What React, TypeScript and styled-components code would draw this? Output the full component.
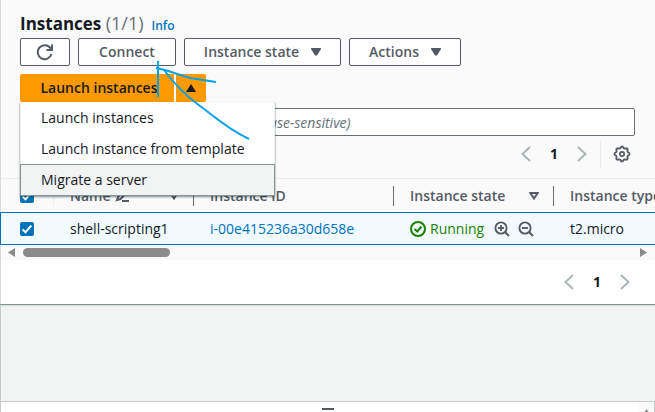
import React from "react";
import styled, { createGlobalStyle, css } from "styled-components";

const color = {
  text: "#16191f",
  secondary: "#545b64",
  muted: "#687078",
  link: "#0073bb",
  line: "#d5dbdb",
  divider: "#eaeded",
  orange: "#ff9900",
  green: "#1d8102",
  header: "#fafafa",
};

const GlobalStyle = createGlobalStyle`
  * { box-sizing: border-box; }
  body {
    margin: 0;
    background: #ffffff;
    color: ${color.text};
    font: 14px/20px "Open Sans", "Noto Sans", sans-serif;
    overflow: hidden;
  }
  button, input { font: inherit; color: inherit; }
`;

const Page = styled.div`
  display: flex;
  flex-direction: column;
  height: 100vh;
`;

const Panel = styled.main`
  flex: none;
  background: #ffffff;
  border-bottom: 1px solid #879596;
`;

const Header = styled.header`
  border-left: 1px solid ${color.line};
  border-bottom: 1px solid ${color.divider};
  background: ${color.header};
  padding: 12px 20px 10px 19px;
`;

const TitleRow = styled.div`
  display: flex;
  align-items: baseline;
  gap: 8px;
  height: 26px;
`;

const Title = styled.h1`
  margin: 0;
  font-size: 17px;
  line-height: 22px;
  font-weight: 700;
`;

const Count = styled.span`
  color: ${color.muted};
  font-size: 18px;
  font-weight: 400;
`;

const InfoLink = styled.a`
  color: ${color.link};
  font-size: 12px;
  font-weight: 600;
  text-decoration: none;
`;

const ButtonRow = styled.div`
  display: flex;
  gap: 8px;
  margin-bottom: 8px;
`;

const Button = styled.button<{ $width: number }>`
  display: flex;
  align-items: center;
  justify-content: center;
  gap: 12px;
  width: ${(p) => p.$width}px;
  height: 28px;
  padding: 0;
  border: 1px solid ${color.secondary};
  border-radius: 2px;
  background: #ffffff;
  color: ${color.secondary};
  font-weight: 600;
  white-space: nowrap;
`;

const LaunchGroup = styled.div`
  position: relative;
  display: flex;
  gap: 2px;
  margin-bottom: 6px;
`;

const LaunchButton = styled.button<{ $end?: boolean }>`
  display: flex;
  align-items: center;
  justify-content: center;
  width: ${(p) => (p.$end ? 30 : 154)}px;
  height: 28px;
  padding: ${(p) => (p.$end ? "0" : "0 0 0 4px")};
  border: 0;
  border-radius: ${(p) => (p.$end ? "0 2px 2px 0" : "2px 0 0 2px")};
  background: ${color.orange};
  color: ${color.text};
  font-weight: 600;
  white-space: nowrap;
`;

const Menu = styled.ul`
  position: absolute;
  z-index: 2;
  top: 28px;
  left: 0;
  width: 255px;
  margin: 0;
  padding: 0;
  list-style: none;
  background: #ffffff;
  border: 1px solid ${color.divider};
  border-width: 0 1px;
  box-shadow: 0 1px 2px rgba(0, 28, 36, 0.5);
`;

const MenuItem = styled.li<{ $active?: boolean }>`
  height: 31px;
  ${(p) =>
    p.$active &&
    css`
      height: 32px;
      margin: 0 -1px;
      border: 1px solid #879596;
      background: #f2f3f3;
    `}
`;

const MenuButton = styled.button`
  display: block;
  width: 100%;
  height: 100%;
  padding: 0 20px;
  border: 0;
  background: transparent;
  text-align: left;
`;

const Search = styled.input`
  display: block;
  width: 100%;
  height: 28px;
  padding: 0 36px;
  border: 1px solid ${color.muted};
  border-radius: 2px;
  background: #ffffff;
  &::placeholder {
    color: ${color.muted};
    font-style: italic;
    opacity: 1;
  }
`;

const Tools = styled.div`
  display: flex;
  justify-content: flex-end;
  align-items: center;
  height: 28px;
  margin-top: 4px;
`;

const Pager = styled.nav`
  display: flex;
  align-items: center;
`;

const IconButton = styled.button<{ $width?: number }>`
  display: flex;
  align-items: center;
  justify-content: center;
  width: ${(p) => p.$width ?? 28}px;
  height: 28px;
  padding: 0;
  border: 0;
  background: transparent;
  color: ${color.secondary};
`;

const PageNumber = styled.span`
  width: 28px;
  text-align: center;
  font-weight: 700;
  font-size: 14px;
`;

const SettingsSlot = styled.div`
  display: flex;
  margin-left: 4px;
  padding-left: 8px;
  border-left: 1px solid ${color.divider};
`;

const TableArea = styled.div`
  overflow: hidden;
  background: ${color.header};
`;

const Table = styled.table`
  width: 100%;
  min-width: 655px;
  table-layout: fixed;
  border-collapse: separate;
  border-spacing: 0;
`;

const HeadCell = styled.th`
  height: 33px;
  padding: 0;
  text-align: left;
  color: ${color.secondary};
  font-weight: 600;
  white-space: nowrap;
  &:first-child {
    border-left: 1px solid ${color.line};
  }
`;

const HeadContent = styled.div<{ $check?: boolean; $light?: boolean; $last?: boolean }>`
  display: flex;
  align-items: center;
  justify-content: space-between;
  height: 20px;
  padding: ${(p) => (p.$check ? "0 0 0 19px" : p.$last ? "0 0 0 16px" : "0 14px 0 16px")};
  border-right: ${(p) => (p.$last ? 0 : 1)}px solid ${(p) => (p.$light ? color.divider : color.muted)};
`;

const HeadLabel = styled.span`
  display: flex;
  align-items: center;
  gap: 4px;
`;

const Cell = styled.td`
  height: 33px;
  padding: 0 0 0 16px;
  border-top: 1px solid ${color.link};
  border-bottom: 1px solid ${color.link};
  background: #f1faff;
  white-space: nowrap;
  &:first-child {
    padding-left: 19px;
    border-left: 1px solid ${color.link};
  }
`;

const CellLink = styled.a`
  color: ${color.link};
  text-decoration: none;
`;

const StateRow = styled.div`
  display: flex;
  align-items: center;
`;

const StateText = styled.span`
  margin: 0 6px 0 4px;
  color: ${color.green};
`;

const CheckLabel = styled.label`
  display: grid;
  width: 14px;
  height: 14px;
  & > * {
    grid-area: 1 / 1;
  }
`;

const Checkbox = styled.input`
  appearance: none;
  width: 14px;
  height: 14px;
  margin: 0;
  border-radius: 2px;
  background: ${color.link};
`;

const ScrollTrack = styled.div`
  display: flex;
  align-items: center;
  justify-content: space-between;
  height: 15px;
  padding: 0 8px 0 7px;
  border-left: 1px solid ${color.line};
  background: ${color.header};
`;

const ScrollLane = styled.div`
  flex: 1;
  padding-left: 8px;
`;

const ScrollThumb = styled.div`
  width: 147px;
  height: 9px;
  border-radius: 5px;
  background: #8b8b8b;
`;

const Footer = styled.footer`
  display: flex;
  justify-content: flex-end;
  align-items: center;
  height: 44px;
  padding-right: 16px;
  border-left: 1px solid ${color.line};
`;

const Backdrop = styled.div`
  flex: 1;
  border-left: 1px solid #c4cbcc;
  border-top: 1px solid ${color.line};
  background: #f2f3f3;
`;

const SplitPanel = styled.section`
  display: flex;
  flex: none;
  height: 11px;
  overflow: hidden;
  border: 1px solid #c8cccc;
  border-bottom: 0;
  background: #ffffff;
`;

const SplitBody = styled.div`
  display: flex;
  flex: 1;
  justify-content: center;
  padding: 6px 0 0 15px;
`;

const SplitHandle = styled.button`
  width: 12px;
  height: 2px;
  padding: 0;
  border: 0;
  background: ${color.secondary};
`;

const SplitScroll = styled.div`
  display: flex;
  justify-content: center;
  width: 15px;
  padding-top: 7px;
  background: #fafafa;
`;

const Ink = styled.svg`
  position: absolute;
  z-index: 3;
  top: -14px;
  left: 134px;
  pointer-events: none;
`;

const Refresh = () => (
  <svg width="18" height="18" viewBox="0 0 18 18" fill="none" stroke="currentColor" strokeWidth="2">
    <path d="M15.5 11A7 7 0 1 1 14.5 5.2L16 7" />
    <path d="M16 1.5V7H10.5" />
  </svg>
);

const Caret = ({ up = false }: { up?: boolean }) => (
  <svg width="10" height="8" viewBox="0 0 10 8" fill="currentColor" aria-hidden="true">
    <path d={up ? "M5 0L10 8H0Z" : "M0 0H10V1L6 7.5H4L0 1Z"} />
  </svg>
);

const SortMark = () => (
  <svg width="10" height="8" viewBox="0 0 10 8" fill="none" stroke="currentColor" strokeWidth="2" aria-hidden="true">
    <path d="M1.3 1H8.7L5 6.5Z" />
  </svg>
);

const Pencil = () => (
  <svg width="15" height="14" viewBox="0 0 15 14" fill="none" stroke="currentColor" strokeWidth="2">
    <path d="M2 11L3 8L9.500 1L12 3.500L5.500 10Z" />
    <path d="M7 12H14" />
  </svg>
);

const Chevron = ({ right = false }: { right?: boolean }) => (
  <svg width="10" height="16" viewBox="0 0 10 16" fill="none" stroke="#aab7b8" strokeWidth="2">
    <path d={right ? "M1 1L8.500 8L1 15" : "M9 1L1.500 8L9 15"} />
  </svg>
);

const gearPoints = Array.from({ length: 32 }, (_, i) => {
  const radius = i % 4 < 2 ? 7.4 : 6.1;
  const angle = ((i - 0.5) * Math.PI) / 16;
  return `${(8 + radius * Math.cos(angle)).toFixed(2)},${(8 + radius * Math.sin(angle)).toFixed(2)}`;
}).join(" ");

const Gear = () => (
  <svg width="16" height="16" viewBox="0 0 16 16" fill="none" stroke="currentColor" overflow="visible">
    <polygon points={gearPoints} strokeWidth="1.800" />
    <circle cx="8" cy="8" r="2.200" strokeWidth="1.700" />
  </svg>
);

const Tick = () => (
  <svg width="14" height="14" viewBox="0 0 14 14" fill="none" stroke="#ffffff" strokeWidth="2" pointerEvents="none">
    <path d="M2.500 7.500L5.500 10.300L11.300 3.500" />
  </svg>
);

const StatusOk = () => (
  <svg width="16" height="16" viewBox="0 0 16 16" fill="none" stroke={color.green} strokeWidth="2">
    <circle cx="8" cy="8" r="7" />
    <path d="M4.500 8L7.300 10.500L11.500 5.500" />
  </svg>
);

const Magnifier = ({ plus = false }: { plus?: boolean }) => (
  <svg width="16" height="16" viewBox="0 0 16 16" fill="none" stroke="currentColor" strokeWidth="1.900">
    <circle cx="7" cy="7" r="5.600" />
    <path d="M11 11L15 15" />
    <path d={plus ? "M4 7H10M7 4V10" : "M4 7H10"} />
  </svg>
);

const ScrollArrow = ({ right = false }: { right?: boolean }) => (
  <svg width="7" height="9" viewBox="0 0 7 9" fill="#8b8b8b">
    <path d={right ? "M0 0L7 4.500L0 9Z" : "M7 0L0 4.500L7 9Z"} />
  </svg>
);

const Pagination = ({ label }: { label: string }) => (
  <Pager aria-label={label}>
    <IconButton aria-label="Previous page">
      <Chevron />
    </IconButton>
    <PageNumber>1</PageNumber>
    <IconButton aria-label="Next page">
      <Chevron right />
    </IconButton>
  </Pager>
);

const SelectBox = ({ label }: { label: string }) => (
  <CheckLabel>
    <Checkbox type="checkbox" defaultChecked aria-label={label} />
    <Tick />
  </CheckLabel>
);

export default function App() {
  return (
    <Page>
      <GlobalStyle />
      <Panel>
        <Header>
          <TitleRow>
            <Title>
              Instances <Count>(1/1)</Count>
            </Title>
            <InfoLink href="#info">Info</InfoLink>
          </TitleRow>
          <ButtonRow>
            <Button $width={50} aria-label="Refresh">
              <Refresh />
            </Button>
            <Button $width={98}>Connect</Button>
            <Button $width={157}>
              Instance state <Caret />
            </Button>
            <Button $width={112}>
              Actions <Caret />
            </Button>
          </ButtonRow>
          <LaunchGroup>
            <LaunchButton>Launch instances</LaunchButton>
            <LaunchButton $end aria-label="More launch options" aria-expanded="true">
              <Caret up />
            </LaunchButton>
            <Menu>
              <MenuItem>
                <MenuButton>Launch instances</MenuButton>
              </MenuItem>
              <MenuItem>
                <MenuButton>Launch instance from template</MenuButton>
              </MenuItem>
              <MenuItem $active>
                <MenuButton>Migrate a server</MenuButton>
              </MenuItem>
            </Menu>
            <Ink width="100" height="82" viewBox="154 60 100 82" fill="none" stroke="#00a2e8" strokeWidth="2">
              <path d="M158 61V97" />
              <path d="M156 68L165 70L190 78L216 82" />
              <path d="M164 70C176 86 186 96 200 106S226 128 249 139" />
            </Ink>
          </LaunchGroup>
          <Search
            type="search"
            aria-label="Find instance"
            placeholder="Find Instance by attribute or tag (case-sensitive)"
          />
          <Tools>
            <Pagination label="Pages" />
            <SettingsSlot>
              <IconButton $width={26} aria-label="Preferences">
                <Gear />
              </IconButton>
            </SettingsSlot>
          </Tools>
        </Header>
        <TableArea>
          <Table>
            <colgroup>
              <col width="54" />
              <col width="140" />
              <col width="200" />
              <col width="160" />
              <col />
            </colgroup>
            <thead>
              <tr>
                <HeadCell>
                  <HeadContent $check $light>
                    <SelectBox label="Select all instances" />
                  </HeadContent>
                </HeadCell>
                <HeadCell>
                  <HeadContent>
                    <HeadLabel>
                      Name <Pencil />
                    </HeadLabel>
                    <SortMark />
                  </HeadContent>
                </HeadCell>
                <HeadCell>
                  <HeadContent>Instance ID</HeadContent>
                </HeadCell>
                <HeadCell>
                  <HeadContent>
                    Instance state <SortMark />
                  </HeadContent>
                </HeadCell>
                <HeadCell>
                  <HeadContent $last>Instance type</HeadContent>
                </HeadCell>
              </tr>
            </thead>
            <tbody>
              <tr>
                <Cell>
                  <SelectBox label="Select shell-scripting1" />
                </Cell>
                <Cell>shell-scripting1</Cell>
                <Cell>
                  <CellLink href="#instance">i-00e415236a30d658e</CellLink>
                </Cell>
                <Cell>
                  <StateRow>
                    <StatusOk />
                    <StateText>Running</StateText>
                    <IconButton $width={24} aria-label="Filter by this state">
                      <Magnifier plus />
                    </IconButton>
                    <IconButton $width={24} aria-label="Exclude this state">
                      <Magnifier />
                    </IconButton>
                  </StateRow>
                </Cell>
                <Cell>t2.micro</Cell>
              </tr>
            </tbody>
          </Table>
        </TableArea>
        <ScrollTrack>
          <ScrollArrow />
          <ScrollLane>
            <ScrollThumb />
          </ScrollLane>
          <ScrollArrow right />
        </ScrollTrack>
        <Footer>
          <Pagination label="Pages, bottom" />
        </Footer>
      </Panel>
      <Backdrop />
      <SplitPanel>
        <SplitBody>
          <SplitHandle aria-label="Resize panel" />
        </SplitBody>
        <SplitScroll>
          <svg width="7" height="5" viewBox="0 0 7 5" fill="#8b8b8b">
            <path d="M3.500 0L7 5H0Z" />
          </svg>
        </SplitScroll>
      </SplitPanel>
    </Page>
  );
}
